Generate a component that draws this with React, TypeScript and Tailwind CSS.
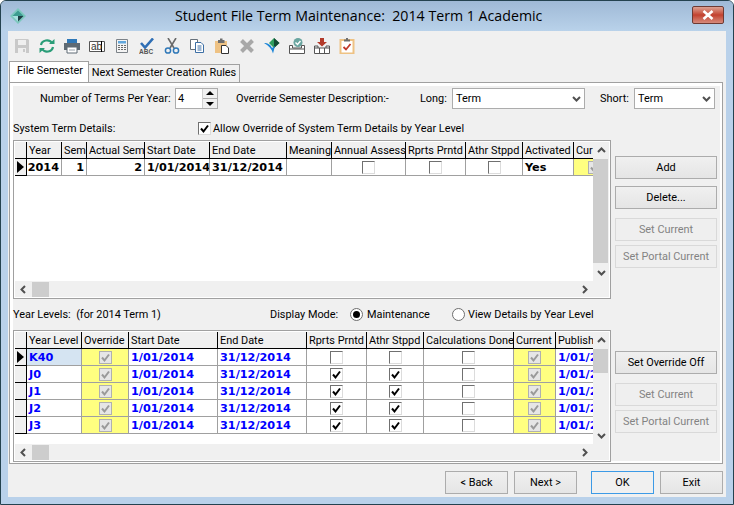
import type { ReactNode } from 'react';

function Check({ color = '#000' }: { color?: string }) {
  return (
    <svg viewBox="0 0 11 11" className="w-[11px] h-[11px]">
      <path d="M2 5.5 L4.5 8.5 L9 2.5" fill="none" stroke={color} strokeWidth="2" />
    </svg>
  );
}

function Box({ state }: { state: 'off' | 'on' | 'dis' }) {
  if (state === 'dis') {
    return (
      <div className="w-[13px] h-[13px] bg-[#e6e6e6] border border-[#b0b0b0] flex items-center justify-center">
        <Check color="#9a9a9a" />
      </div>
    );
  }
  return (
    <div className="w-[13px] h-[13px] bg-white border border-[#dcdcdc] border-t-[#707070] border-l-[#707070] flex items-center justify-center">
      {state === 'on' && <Check />}
    </div>
  );
}

function Btn({ children, disabled, focus, className = '' }: { children: ReactNode; disabled?: boolean; focus?: boolean; className?: string }) {
  const look = disabled
    ? 'border-[#d9d9d9] bg-[#efefef] text-[#838383]'
    : focus
      ? 'border-[#3c9ae6] bg-[#f0f0f0] text-black'
      : 'border-[#acacac] bg-gradient-to-b from-[#f0f0f0] to-[#e5e5e5] text-black';
  return <div className={`h-[23px] border pt-[1px] flex items-center justify-center whitespace-nowrap ${look} ${className}`}>{children}</div>;
}

function Chevron({ dir }: { dir: 'up' | 'down' | 'left' | 'right' }) {
  const d = {
    up: 'M1 6 L4.5 2.5 L8 6',
    down: 'M1 3 L4.5 6.5 L8 3',
    left: 'M6 1 L2.5 4.5 L6 8',
    right: 'M3 1 L6.5 4.5 L3 8',
  }[dir];
  return (
    <svg viewBox="0 0 9 9" className="w-[9px] h-[9px]">
      <path d={d} fill="none" stroke="#505050" strokeWidth="2" />
    </svg>
  );
}

function Pointer() {
  return (
    <svg viewBox="0 0 8 12" className="w-[8px] h-[12px] ml-[2px]">
      <path d="M0 0 L7 6 L0 12 Z" fill="#000" />
    </svg>
  );
}

function Hd({ children, last }: { children?: ReactNode; last?: boolean }) {
  return (
    <div className={`h-[17px] bg-[#f0f0f0] border-b border-black pl-[2px] pt-[2px] whitespace-nowrap overflow-hidden leading-[14px] ${last ? '' : 'border-r border-r-black'}`}>
      {children}
    </div>
  );
}

function Cell({ children, className = '', last }: { children?: ReactNode; className?: string; last?: boolean }) {
  return (
    <div className={`h-[17px] border-b border-[#a0a0a0] flex items-center whitespace-nowrap overflow-hidden font-['DejaVu_Sans',sans-serif] font-bold text-[11.25px] ${last ? '' : 'border-r'} ${className}`}>
      {children}
    </div>
  );
}

function Indicator({ active }: { active?: boolean }) {
  return <div className="h-[17px] bg-[#f0f0f0] border-b border-r border-black flex items-center">{active && <Pointer />}</div>;
}

function GridFrame({ children, height, thumb, spacer }: { children: ReactNode; height: string; thumb: string; spacer: string }) {
  return (
    <div className={`w-[598px] ${height} border border-[#a0a0a0] bg-white p-[1px] flex`}>
      <div className="w-[578px] flex flex-col">
        <div className="flex-1 overflow-hidden">{children}</div>
        <div className="h-[16px] bg-[#f0f0f0] flex items-center">
          <div className="w-[17px] flex justify-center"><Chevron dir="left" /></div>
          <div className="w-[17px] h-[15px] bg-[#cdcdcd]" />
          <div className="flex-1" />
          <div className="w-[17px] flex justify-center"><Chevron dir="right" /></div>
        </div>
      </div>
      <div className="w-[16px] bg-[#f0f0f0] flex flex-col">
        <div className="h-[17px] flex items-center justify-center"><Chevron dir="up" /></div>
        <div className={`${thumb} mr-[1px] bg-[#cdcdcd]`} />
        <div className={spacer} />
        <div className="h-[17px] flex items-center justify-center"><Chevron dir="down" /></div>
        <div className="h-[16px]" />
      </div>
    </div>
  );
}

function SystemGrid() {
  const center = 'justify-center pt-[1px]';
  const right = 'justify-end pr-[2px] pt-[2px]';
  const left = 'pl-[2px] pt-[2px]';
  return (
    <GridFrame height="h-[159px]" thumb="h-[104px]" spacer="h-[1px]">
      <div className="grid grid-cols-[12px_35px_25px_58px_65px_77px_45px_74px_60px_57px_51px_19px]">
        <Hd />
        <Hd>Year</Hd>
        <Hd>Sem</Hd>
        <Hd>Actual Sem</Hd>
        <Hd>Start Date</Hd>
        <Hd>End Date</Hd>
        <Hd>Meaning</Hd>
        <Hd>Annual Assess</Hd>
        <Hd>Rprts Prntd</Hd>
        <Hd>Athr Stppd</Hd>
        <Hd>Activated</Hd>
        <Hd last>Current</Hd>
        <Indicator active />
        <Cell className={right}>2014</Cell>
        <Cell className={right}>1</Cell>
        <Cell className={right}>2</Cell>
        <Cell className={left}>1/01/2014</Cell>
        <Cell className={left}>31/12/2014</Cell>
        <Cell />
        <Cell className={center}><Box state="off" /></Cell>
        <Cell className={center}><Box state="off" /></Cell>
        <Cell className={center}><Box state="off" /></Cell>
        <Cell className={left}>Yes</Cell>
        <Cell last className="bg-[#ffff80] pl-[14px] pt-[1px]"><div className="shrink-0"><Box state="dis" /></div></Cell>
      </div>
    </GridFrame>
  );
}

const levels = [
  { name: 'K40', active: true, printed: 'off' as const, stopped: 'off' as const },
  { name: 'J0', printed: 'on' as const, stopped: 'on' as const },
  { name: 'J1', printed: 'on' as const, stopped: 'on' as const },
  { name: 'J2', printed: 'on' as const, stopped: 'on' as const },
  { name: 'J3', printed: 'on' as const, stopped: 'on' as const },
];

function LevelGrid() {
  const blue = 'text-[#0000ff] pl-[2px] pt-[2px]';
  const yellow = 'bg-[#ffff80] justify-center pt-[1px]';
  const center = 'justify-center pt-[1px]';
  return (
    <GridFrame height="h-[132px]" thumb="h-[24px]" spacer="h-[54px]">
      <div className="grid grid-cols-[12px_55px_47px_89px_89px_60px_57px_90px_42px_37px]">
        <Hd />
        <Hd>Year Level</Hd>
        <Hd>Override</Hd>
        <Hd>Start Date</Hd>
        <Hd>End Date</Hd>
        <Hd>Rprts Prntd</Hd>
        <Hd>Athr Stppd</Hd>
        <Hd>Calculations Done</Hd>
        <Hd>Current</Hd>
        <Hd last>Publish</Hd>
        {levels.map(l => (
          <div key={l.name} className="contents">
            <Indicator active={l.active} />
            <Cell className={`${blue} ${l.active ? 'bg-[#d5e4f2]' : ''}`}>{l.name}</Cell>
            <Cell className={yellow}><Box state="dis" /></Cell>
            <Cell className={blue}>1/01/2014</Cell>
            <Cell className={blue}>31/12/2014</Cell>
            <Cell className={center}><Box state={l.printed} /></Cell>
            <Cell className={center}><Box state={l.stopped} /></Cell>
            <Cell className={center}><Box state="off" /></Cell>
            <Cell className={yellow}><Box state="dis" /></Cell>
            <Cell last className={blue}>1/01/2014</Cell>
          </div>
        ))}
      </div>
    </GridFrame>
  );
}

function Select({ value, width }: { value: string; width: string }) {
  return (
    <div className={`${width} h-[21px] bg-white border border-[#acacac] flex items-center pl-[3px] pr-[3px]`}>
      <span className="flex-1">{value}</span>
      <Chevron dir="down" />
    </div>
  );
}

function Radio({ on }: { on?: boolean }) {
  return (
    <div className="w-[13px] h-[13px] rounded-full bg-white border border-[#6e6e6e] flex items-center justify-center">
      {on && <div className="w-[7px] h-[7px] rounded-full bg-black" />}
    </div>
  );
}

function Toolbar() {
  return (
    <div className="h-[29px] pl-[6px] pt-[7px] flex gap-[9px] items-start">
      <svg viewBox="0 0 16 16" className="w-[16px] h-[16px]">
        <path d="M1 1 H14 L15 2 V15 H1 Z" fill="#c9c9c9" />
        <path d="M4 2 H12 V7 H4 Z" fill="#efefef" />
        <path d="M4 10 H12 V15 H4 Z" fill="#efefef" />
        <path d="M9 11 H11 V14 H9 Z" fill="#c9c9c9" />
      </svg>
      <svg viewBox="0 0 16 16" className="w-[16px] h-[16px]">
        <path d="M2 7 A6 5.5 0 0 1 13 5" fill="none" stroke="#2a9d78" strokeWidth="2.2" />
        <path d="M14 9 A6 5.5 0 0 1 3 11" fill="none" stroke="#2a9d78" strokeWidth="2.2" />
        <path d="M10 6 H15.5 V1 Z" fill="#2a9d78" />
        <path d="M6 10 H0.5 V15 Z" fill="#2a9d78" />
      </svg>
      <svg viewBox="0 0 16 16" className="w-[16px] h-[16px]">
        <path d="M3 1 H13 V5 H3 Z" fill="#2f78b8" />
        <path d="M0 5 H16 V12 H0 Z" fill="#5e6a74" />
        <path d="M3 9 H13 V15 H3 Z" fill="#fff" stroke="#5e6a74" />
        <path d="M5 12 H11" stroke="#9aa4ad" />
      </svg>
      <svg viewBox="0 0 16 16" className="w-[16px] h-[16px]">
        <path d="M0.5 3.5 H15.5 V13.5 H0.5 Z" fill="#fff" stroke="#555" />
        <path d="M12.5 3 V14" stroke="#000" />
        <text x="2" y="11.5" fontSize="10" fill="#333" fontFamily="'Liberation Sans', sans-serif">ab</text>
      </svg>
      <svg viewBox="0 0 16 16" className="w-[16px] h-[16px]">
        <path d="M2.5 1.5 H13.5 V14.5 H2.5 Z" fill="#f4f4f4" stroke="#7c8288" />
        <path d="M4 3 H12 V5.5 H4 Z" fill="#62a7dc" />
        <path d="M4 7.5 H12 M4 9.5 H12 M4 11.5 H12" stroke="#6b6b6b" strokeDasharray="2 1" strokeWidth="1.2" />
      </svg>
      <svg viewBox="0 0 16 16" className="w-[16px] h-[16px]">
        <path d="M2 5 L6 9.5 L14 0.5" fill="none" stroke="#2f6fb5" strokeWidth="2.6" />
        <text x="0" y="15.5" fontSize="6.5" fontWeight="700" fill="#555" fontFamily="'Liberation Sans', sans-serif">ABC</text>
      </svg>
      <svg viewBox="0 0 16 16" className="w-[16px] h-[16px]">
        <path d="M4 0 L10 10 M12 0 L6 10" stroke="#6b6b6b" strokeWidth="1.6" />
        <circle cx="4" cy="12.5" r="2.6" fill="none" stroke="#2f78b8" strokeWidth="1.5" />
        <circle cx="12" cy="12.5" r="2.6" fill="none" stroke="#2f78b8" strokeWidth="1.5" />
      </svg>
      <svg viewBox="0 0 16 16" className="w-[16px] h-[16px]">
        <path d="M1.5 1.5 H8.5 V11.5 H1.5 Z" fill="#fff" stroke="#66707a" />
        <path d="M6.5 4.5 H12 L14.5 7 V14.5 H6.5 Z" fill="#fff" stroke="#3d6fa5" />
        <path d="M8.5 8 H12.5 M8.5 10 H12.5 M8.5 12 H12.5" stroke="#3d6fa5" />
      </svg>
      <svg viewBox="0 0 16 16" className="w-[16px] h-[16px]">
        <path d="M1 3 H13 V15 H1 Z" fill="#eec284" />
        <path d="M4 2 H6 V0.5 H8.5 V2 H10.5 V5 H4 Z" fill="#6e6e6e" />
        <path d="M7.5 7.5 H12 L14.5 10 V15.5 H7.5 Z" fill="#fff" stroke="#333" />
      </svg>
      <svg viewBox="0 0 16 16" className="w-[16px] h-[16px]">
        <path d="M2.5 2.5 L13.5 13.5 M13.5 2.5 L2.5 13.5" stroke="#a8a8a8" strokeWidth="4" />
      </svg>
      <svg viewBox="0 0 16 16" className="w-[16px] h-[16px]">
        <path d="M10 0 L15.5 5 L10 10 L5 5 Z" fill="#2f9e5f" />
        <path d="M10 0 L15.5 5 L10 10 Z" fill="#134a34" />
        <path d="M0 5 C4 5 7 7 8 10 L11 8 L9 15.5 C8 11 5 8 0 5 Z" fill="#1c86d8" />
      </svg>
      <svg viewBox="0 0 16 16" className="w-[16px] h-[16px]">
        <circle cx="9" cy="4.5" r="4.5" fill="#6aa5a0" />
        <path d="M6.5 4.5 L8.5 6.5 L11.5 3" fill="none" stroke="#fff" strokeWidth="1.4" />
        <path d="M0.5 7.5 H3.5 V10 H12.5 V7.5 H15.5 V15.5 H0.5 Z M0.5 11 H15.5" fill="#fff" stroke="#555" />
      </svg>
      <svg viewBox="0 0 16 16" className="w-[16px] h-[16px]">
        <path d="M6 0 H10 V4 H13 L8 8.5 L3 4 H6 Z" fill="#b23a2a" />
        <path d="M0.5 10 H15.5 V15.5 H0.5 Z" fill="#fff" stroke="#555" />
        <path d="M0.5 10 V8 H4 V10 M12 10 V8 H15.5 V10 M5.5 10 V15.5 M10.5 10 V15.5" fill="none" stroke="#555" />
      </svg>
      <svg viewBox="0 0 16 16" className="w-[16px] h-[16px]">
        <path d="M1.5 2 H14.5 V15.5 H1.5 Z" fill="#fff" stroke="#eec284" strokeWidth="2" />
        <path d="M5 3.5 V1.5 H7 V0 H9 V1.5 H11 V3.5 Z" fill="#6e6e6e" />
        <path d="M4.5 9 L7 11.5 L11.5 6" fill="none" stroke="#c0392b" strokeWidth="1.8" />
      </svg>
    </div>
  );
}

export default function App() {
  return (
    <div className="w-[734px] h-[505px] overflow-hidden bg-[#b9d1ea] rounded-t-[6px] border border-[#24424f] font-['Roboto',sans-serif] text-[10.9px] leading-[14px] text-black">
      <div className="h-[30px] -mx-[1px] bg-gradient-to-b from-[#9fb9d6] to-[#b9d2ea] flex items-center">
        <svg viewBox="0 0 16 16" className="w-[16px] h-[16px] ml-[10px]">
          <path d="M8 0 L16 8 L8 16 L0 8 Z" fill="#7cc7bd" />
          <path d="M8 2.5 L13.5 8 H2.5 Z" fill="#3d9c90" />
          <path d="M2.5 8 H8 V13.5 Z" fill="#a8e0e0" />
          <path d="M8 8 H13.5 L8 13.5 Z" fill="#1e3f45" />
        </svg>
        <div className="ml-[149px] w-[500px] font-['Open_Sans',sans-serif] text-[14.2px] whitespace-pre">Student File Term Maintenance:  2014 Term 1 Academic</div>
        <div className="ml-[17px] mt-[-2px] w-[32px] h-[18px] rounded-[2px] border border-[#6e3a33] bg-gradient-to-b from-[#dba193] via-[#c2412f] to-[#d58a7c] flex items-center justify-center">
          <svg viewBox="0 0 12 10" className="w-[12px] h-[10px]">
            <path d="M1.5 1 L10.5 9 M10.5 1 L1.5 9" stroke="#fff" strokeWidth="2.6" />
          </svg>
        </div>
      </div>
      <div className="ml-[7px] w-[718px] h-[466px] bg-[#f0f0f0]">
        <Toolbar />
        <div className="h-[22px] pl-[1px] flex items-end">
          <div className="w-[80px] h-[21px] bg-white border border-b-0 border-[#a0a0a0] pl-[7px] pt-[2px] whitespace-nowrap">File Semester</div>
          <div className="w-[151px] h-[18px] bg-[#f0f0f0] border border-l-0 border-b-0 border-[#a0a0a0] text-center pt-[1px] whitespace-nowrap">Next Semester Creation Rules</div>
        </div>
        <div className="ml-[1px] w-[714px] h-[382px] border border-[#a0a0a0] bg-[#f0f0f0] border-t-[#a0a0a0]">
          <div className="h-full border-t-[3px] border-l-[3px] border-r-[2px] border-b-[2px] border-white">
            <div className="pt-[2px] h-[23px] flex items-center whitespace-nowrap">
              <div className="ml-[27px] w-[135px]">Number of Terms Per Year:</div>
              <div className="w-[43px] h-[21px] bg-white border border-[#acacac] flex items-center pl-[2px]">
                <span className="flex-1">4</span>
                <div className="w-[15px] h-full bg-[#f0f0f0] flex flex-col items-center justify-around border-l border-[#d0d0d0]">
                  <div className="w-0 h-0 border-x-[4px] border-x-transparent border-b-[4px] border-b-black" />
                  <div className="w-full h-[1px] bg-[#acacac]" />
                  <div className="w-0 h-0 border-x-[4px] border-x-transparent border-t-[4px] border-t-black" />
                </div>
              </div>
              <div className="ml-[18px] w-[184px]">Override Semester Description:-</div>
              <div className="w-[32px]">Long:</div>
              <Select value="Term" width="w-[133px]" />
              <div className="ml-[15px] w-[34px]">Short:</div>
              <Select value="Term" width="w-[81px]" />
            </div>
            <div className="mt-[13px] h-[18px] flex items-start">
              <div className="w-[185px]">System Term Details:</div>
              <Box state="on" />
              <div className="ml-[2px]">Allow Override of System Term Details by Year Level</div>
            </div>
            <div className="flex">
              <SystemGrid />
              <div className="ml-[4px] w-[102px] pt-[16px] flex flex-col">
                <Btn>Add</Btn>
                <Btn className="mt-[7px]">Delete...</Btn>
                <Btn disabled className="mt-[9px]">Set Current</Btn>
                <Btn disabled className="mt-[4px]">Set Portal Current</Btn>
              </div>
            </div>
            <div className="h-[31px] flex items-center">
              <div className="w-[257px] whitespace-pre">Year Levels:  (for 2014 Term 1)</div>
              <div className="w-[80px]">Display Mode:</div>
              <Radio on />
              <div className="ml-[4px] w-[85px]">Maintenance</div>
              <Radio />
              <div className="ml-[3px]">View Details by Year Level</div>
            </div>
            <div className="flex">
              <LevelGrid />
              <div className="ml-[4px] w-[102px] pt-[21px] flex flex-col">
                <Btn>Set Override Off</Btn>
                <Btn disabled className="mt-[9px]">Set Current</Btn>
                <Btn disabled className="mt-[4px]">Set Portal Current</Btn>
              </div>
            </div>
          </div>
        </div>
        <div className="pt-[7px] pr-[3px] flex justify-end">
          <Btn className="w-[63px]">&lt; Back</Btn>
          <Btn className="w-[63px] ml-[6px]">Next &gt;</Btn>
          <Btn focus className="w-[63px] ml-[14px]">OK</Btn>
          <Btn className="w-[63px] ml-[6px]">Exit</Btn>
        </div>
      </div>
    </div>
  );
}
